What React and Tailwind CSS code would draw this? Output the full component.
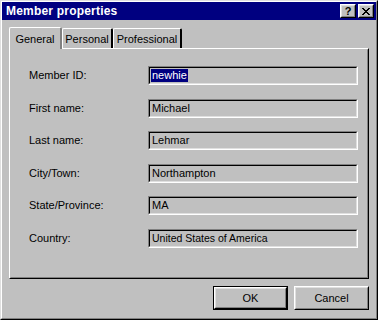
import React from 'react';

const fields = [
  { label: 'Member ID:', value: 'newhie', selected: true },
  { label: 'First name:', value: 'Michael' },
  { label: 'Last name:', value: 'Lehmar' },
  { label: 'City/Town:', value: 'Northampton' },
  { label: 'State/Province:', value: 'MA' },
  { label: 'Country:', value: 'United States of America', small: true },
];

const Raised = ({ className = '', children }) => (
  <div className={`border border-t-white border-l-white border-r-black border-b-black ${className}`}>
    <div className="w-full h-full border border-t-[#dfdfdf] border-l-[#dfdfdf] border-r-[#808080] border-b-[#808080] flex items-center justify-center">
      {children}
    </div>
  </div>
);

const Field = ({ label, value, selected, small }) => (
  <div className="flex items-center h-[19px]">
    <span className="w-[137px] pl-[18px] text-[11px] text-black">{label}</span>
    <div className="w-[210px] h-[19px] border border-t-[#808080] border-l-[#808080] border-r-white border-b-white">
      <div className="w-full h-full border border-t-black border-l-black border-r-[#dfdfdf] border-b-[#dfdfdf] flex items-center pl-[1px]">
        {selected ? (
          <span className="bg-[#000080] text-white text-[11px] leading-[13px] px-[1px]">{value}</span>
        ) : (
          <span className={`${small ? 'text-[10.5px]' : 'text-[11px]'} text-black leading-[13px] pl-[1px]`}>{value}</span>
        )}
      </div>
    </div>
  </div>
);

export default function App() {
  return (
    <div className="w-[378px] h-[320px] bg-[#c0c0c0] font-['Liberation_Sans',Arial,sans-serif] select-none">
      {/* window frame */}
      <div className="w-full h-full border border-t-[#dfdfdf] border-l-[#dfdfdf] border-r-black border-b-black">
        <div className="w-full h-full border border-t-white border-l-white border-r-[#808080] border-b-[#808080] flex flex-col">
          {/* title bar */}
          <div className="h-[18px] bg-[#000080] flex items-center justify-between pl-[4px] pr-[2px]">
            <span className="text-white font-bold text-[12px] leading-none tracking-[0.2px]">Member properties</span>
            <div className="flex gap-[2px]">
              <Raised className="w-[16px] h-[14px] bg-[#c0c0c0]">
                <span className="text-black font-bold text-[11px] leading-none">?</span>
              </Raised>
              <Raised className="w-[16px] h-[14px] bg-[#c0c0c0]">
                <svg width="8" height="7" viewBox="0 0 8 7" shapeRendering="crispEdges">
                  <path d="M0 0h2v1h-2zM6 0h2v1h-2zM1 1h2v1h-2zM5 1h2v1h-2zM2 2h4v1h-4zM3 3h2v1h-2zM2 4h4v1h-4zM1 5h2v1h-2zM5 5h2v1h-2zM0 6h2v1h-2zM6 6h2v1h-2z" fill="#000" />
                </svg>
              </Raised>
            </div>
          </div>

          {/* tabs */}
          <div className="flex items-end pl-[7px] mt-[6px] h-[22px] relative z-10">
            <div className="h-[22px] w-[53px] bg-[#c0c0c0] border-l border-t border-white border-r-2 border-r-[#808080] rounded-tl-[2px] rounded-tr-[2px] -mb-[1px] flex items-start justify-center pt-[3px] text-[11px] text-black">
              General
            </div>
            <div className="h-[20px] w-[51px] border-l border-t border-white border-r-2 border-r-black rounded-tl-[2px] rounded-tr-[2px] flex items-start justify-center pt-[2px] text-[11px] text-black">
              Personal
            </div>
            <div className="h-[20px] w-[69px] border-l border-t border-white border-r-2 border-r-black rounded-tl-[2px] rounded-tr-[2px] flex items-start justify-center pt-[2px] text-[11px] text-black">
              Professional
            </div>
          </div>

          {/* tab panel */}
          <div className="ml-[7px] mr-[7px] h-[231px] border border-t-white border-l-white border-r-black border-b-black">
            <div className="w-full h-full border border-t-transparent border-l-transparent border-r-[#808080] border-b-[#808080] flex flex-col gap-[13.5px] pt-[16px]">
              {fields.map((f) => (
                <Field key={f.label} {...f} />
              ))}
            </div>
          </div>

          {/* buttons */}
          <div className="flex justify-end gap-[6px] pr-[7px] mt-[7px]">
            <div className="w-[75px] h-[24px] border border-black">
              <Raised className="w-full h-full">
                <span className="text-[11px] text-black">OK</span>
              </Raised>
            </div>
            <Raised className="w-[75px] h-[24px]">
              <span className="text-[11px] text-black">Cancel</span>
            </Raised>
          </div>
        </div>
      </div>
    </div>
  );
}
